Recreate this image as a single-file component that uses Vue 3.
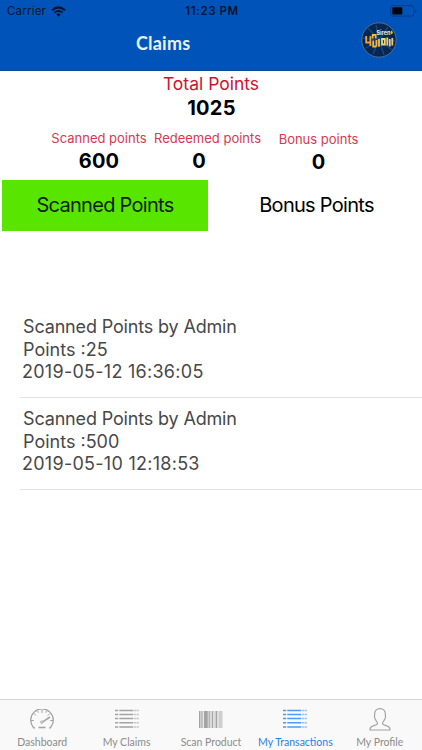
<script setup>
const stats = [
  { key: 'scanned', label: 'Scanned points', value: 600 },
  { key: 'redeemed', label: 'Redeemed points', value: 0 },
  { key: 'bonus', label: 'Bonus points', value: 0 },
]
const rows = [
  { title: 'Scanned Points by Admin', points: 25, date: '2019-05-12 16:36:05' },
  { title: 'Scanned Points by Admin', points: 500, date: '2019-05-10 12:18:53' },
]
const tabs = [
  { label: 'Dashboard', icon: 'gauge' },
  { label: 'My Claims', icon: 'list' },
  { label: 'Scan Product', icon: 'barcode' },
  { label: 'My Transactions', icon: 'list', active: true },
  { label: 'My Profile', icon: 'person' },
]
const listLines = [1.5, 5.5, 9.5, 13.8, 18]
</script>

<template>
  <div class="screen">
    <header class="header">
      <div class="status">
        <div class="carrier">
          <span class="carrier-name">Carrier</span>
          <svg class="wifi" width="15" height="11" viewBox="0 0 15 11">
            <g fill="none" stroke="#04142e" stroke-width="2">
              <path d="M1 4.2Q7.5-1.4 14 4.2" />
              <path d="M3.4 6.7Q7.5 3.2 11.6 6.7" />
            </g>
            <path d="M5.3 8.4Q7.5 6.6 9.7 8.4L7.5 10.7Z" fill="#04142e" />
          </svg>
        </div>
        <span class="clock">11:23 PM</span>
        <svg class="battery" width="27" height="12" viewBox="0 0 27 12">
          <rect x="0.7" y="0.7" width="23" height="10.4" rx="2.4" fill="none" stroke="#073a83" stroke-width="1" />
          <rect x="2.3" y="2.3" width="10" height="7.2" rx="0.8" fill="#000510" />
          <path d="M25 4q1.5 0.4 1.5 2t-1.5 2z" fill="#073a83" />
        </svg>
      </div>
      <div class="nav">
        <span></span>
        <h1>Claims</h1>
        <svg class="logo" width="36" height="36" viewBox="0 0 36 36">
          <circle cx="18" cy="18" r="17.2" fill="#08264f" stroke="#52779f" stroke-width="0.9" />
          <g stroke="#0d4a85" stroke-width="1.4" fill="none">
            <path d="M18 18L7 6M18 18L15 3M18 18L27 5M18 18L5 26M18 18L12 32M18 18L23 33M18 18L31 28M18 18L2 16M18 18L34 19" />
          </g>
          <text x="15.5" y="13" class="logo-text">Siren</text>
          <path d="M29.5 10.500l1.200-2.300 1.200 2.200-1.200 2z" fill="#b8d84a" />
          <g fill="none" stroke-width="1.800">
            <path d="M5.200 14v6.500h4.200M9.400 14v10" stroke="#f0a238" />
            <path d="M11.700 16.500v-3.500h3v3.500M12.200 18.500v6h3.200M15.400 18v6.500" stroke="#f4b64a" />
            <path d="M18 17v7.800" stroke="#f2c04f" />
            <path d="M21 22.500v-5.500h2.800v5.500z" stroke="#f5d373" />
            <path d="M26.300 15.500v8M28.800 17v7.500M31.300 16v7.500" stroke="#efc880" />
          </g>
        </svg>
      </div>
    </header>

    <section class="summary">
      <div class="total-label"><span>Total Points</span></div>
      <div class="total-value"><span>1025</span></div>
      <div class="stats">
        <div v-for="s in stats" :key="s.key" class="stat" :class="s.key">
          <span class="stat-label">{{ s.label }}</span>
          <span class="stat-value">{{ s.value }}</span>
        </div>
      </div>
    </section>

    <div class="switcher">
      <button class="seg on">Scanned Points</button>
      <button class="seg off">Bonus Points</button>
    </div>

    <main class="list">
      <article v-for="r in rows" :key="r.date" class="row">
        <div class="row-title"><span>{{ r.title }}</span></div>
        <div class="row-points"><span>Points :{{ r.points }}</span></div>
        <div class="row-date"><span>{{ r.date }}</span></div>
      </article>
    </main>

    <nav class="tabbar">
      <a v-for="t in tabs" :key="t.label" class="tab" :class="{ active: t.active }">
        <svg v-if="t.icon === 'gauge'" width="24" height="21" viewBox="0 0 24 21" fill="none" stroke="currentColor">
          <path d="M5 18.800H3.600A11.300 11.300 0 1 1 20.400 18.800H19" stroke-width="1.300" />
          <path d="M1 11.500h2.800M4 4.500l2 2M12 1v3M19.800 4.500l-2 2M23 11.500h-2.800M7.600 2l.8 1.700M16.400 2l-.8 1.700" stroke-width="1" />
          <path d="M20 8l-7.300 4.800" stroke-width="1.500" />
          <circle cx="11.800" cy="13.200" r="1.200" stroke-width="1" />
          <path d="M8.500 18.500h7" stroke-width="1.600" />
        </svg>
        <svg v-else-if="t.icon === 'list'" width="24" height="21" viewBox="0 0 24 21" stroke="currentColor" stroke-width="1.500">
          <g v-for="y in listLines" :key="y">
            <path :d="`M0 ${y}h3.200M4.300 ${y}h14`" />
            <path :d="`M19 ${y}h2.300M21.700 ${y}h2.300`" opacity="0.55" />
          </g>
        </svg>
        <svg v-else-if="t.icon === 'barcode'" width="24" height="21" viewBox="0 0 24 21" stroke="currentColor">
          <path d="M0 2h23.500v17H0z" fill="currentColor" stroke="none" opacity="0.5" />
          <path d="M0.500 2v17M13.400 2v17M17.500 2v17" stroke-width="1" />
          <path d="M3 2v17M10.600 2v17" stroke-width="1" opacity="0.65" />
          <path d="M6.800 2v17" stroke-width="3.600" />
          <path d="M4.400 2v17M12 2v17M15 2v17M19 2v17" stroke="#f9f9f9" stroke-width="0.700" />
        </svg>
        <svg v-else width="22" height="23" viewBox="0 0 22 23" fill="none" stroke="currentColor" stroke-width="1.200">
          <path d="M1 22c0-2.500.6-3.500 3.200-4.200 3-.8 4.300-1.500 4.300-2.600 0-1-1-1.700-1.800-3.300-.6-1.200-1.300-1.600-1.200-3C5.500 8 5.800 7.800 5.600 6 5.500 2.800 7.700.7 11 .7s5.500 2.100 5.400 5.300c-.2 1.800.1 2 .1 2.900.1 1.400-.6 1.800-1.200 3-.8 1.600-1.800 2.300-1.800 3.300 0 1.100 1.300 1.800 4.300 2.600 2.600.7 3.200 1.700 3.200 4.200z" />
        </svg>
        <span class="tab-label">{{ t.label }}</span>
      </a>
    </nav>
  </div>
</template>

<style>
body {
  margin: 0;
  background: #fff;
}
</style>

<style scoped>
.screen {
  width: 422px;
  height: 750px;
  display: flex;
  flex-direction: column;
  overflow: hidden;
  background: #fff;
  font-family: Inter, "Liberation Sans", sans-serif;
  color: #000;
}
span {
  white-space: nowrap;
}
.header {
  height: 71px;
  box-sizing: border-box;
  flex: none;
  background: #0054b9;
  border-bottom: 1px solid #0a4da3;
}
.status {
  height: 22px;
  display: grid;
  grid-template-columns: 1fr auto 1fr;
  align-items: center;
  padding: 0 5px 0 7px;
  color: #04142e;
}
.carrier {
  display: flex;
  align-items: center;
  gap: 5px;
}
.carrier-name {
  font-size: 11.500px;
  letter-spacing: 0.2px;
}
.clock {
  font-size: 11.500px;
  font-weight: 600;
  letter-spacing: 0.600px;
}
.battery {
  justify-self: end;
}
.nav {
  height: 36px;
  display: grid;
  grid-template-columns: 136px 1fr 36px;
  align-items: center;
  padding-right: 25px;
}
h1 {
  margin: 5px 0 0;
  font-family: Lato, sans-serif;
  font-size: 18px;
  line-height: 24px;
  font-weight: 700;
  letter-spacing: 0.2px;
  color: #e4f3ff;
}
.logo-text {
  font: 700 5.500px Inter, sans-serif;
  fill: #e5eef8;
}
.summary {
  height: 108.500px;
  flex: none;
}
.total-label {
  height: 25px;
  line-height: 26px;
  text-align: center;
  font-size: 17.500px;
  color: #d0112f;
}
.total-value {
  height: 23px;
  line-height: 24px;
  padding-left: 1px;
  text-align: center;
  font-size: 20px;
  font-weight: 700;
}
.total-value span {
  letter-spacing: 0.3px;
}
.stats {
  display: flex;
  padding: 9px 0 0 52px;
}
.stat {
  display: flex;
  flex-direction: column;
  align-items: center;
}
.scanned {
  width: 94px;
}
.redeemed {
  width: 107px;
  margin-left: 8px;
}
.redeemed .stat-value {
  padding-right: 17px;
}
.bonus {
  width: 79px;
  margin-left: 18px;
  padding-top: 1px;
}
.stat-label {
  font-size: 13px;
  line-height: 20px;
  color: #d83850;
}
.stat-value {
  font-size: 20px;
  font-weight: 700;
  line-height: 27px;
  letter-spacing: 0.2px;
}
.switcher {
  display: flex;
  height: 51px;
  flex: none;
  gap: 5px;
  padding: 0 2px;
}
.seg {
  flex: 1;
  border: 0;
  padding: 0;
  background: #fff;
  font: 400 20px Inter, sans-serif;
  letter-spacing: -0.720px;
  color: #000;
}
.on {
  flex: 0 0 206px;
  background: #58e600;
  color: #0b1e00;
}
.list {
  flex: 1;
  padding: 75.500px 0 0 20px;
}
.row {
  height: 92px;
  box-sizing: border-box;
  padding: 9px 0 0 3px;
  border-bottom: 1px solid #e3e3e3;
  font-size: 18px;
  color: #484848;
}
.row-title {
  height: 23px;
  line-height: 24px;
  letter-spacing: -0.160px;
}
.row-points {
  height: 22px;
  line-height: 24px;
}
.row-date {
  height: 22px;
  line-height: 24px;
  margin-left: -1px;
  letter-spacing: 0.270px;
}
.tabbar {
  height: 51px;
  box-sizing: border-box;
  flex: none;
  display: grid;
  grid-template-columns: repeat(5, 1fr);
  border-top: 1px solid #d6d6d6;
  background: #f9f9f9;
}
.tab {
  display: grid;
  grid-template-rows: 35px 14px;
  justify-items: center;
  align-items: center;
  color: #a3a3a3;
}
.tab svg {
  margin-top: 4px;
}
.tab-label {
  font-family: Lato, sans-serif;
  font-size: 10.500px;
  line-height: 13px;
  color: #8c8c8c;
}
.active {
  color: #4b9cf5;
}
.active .tab-label {
  color: #1e82ea;
}
</style>
